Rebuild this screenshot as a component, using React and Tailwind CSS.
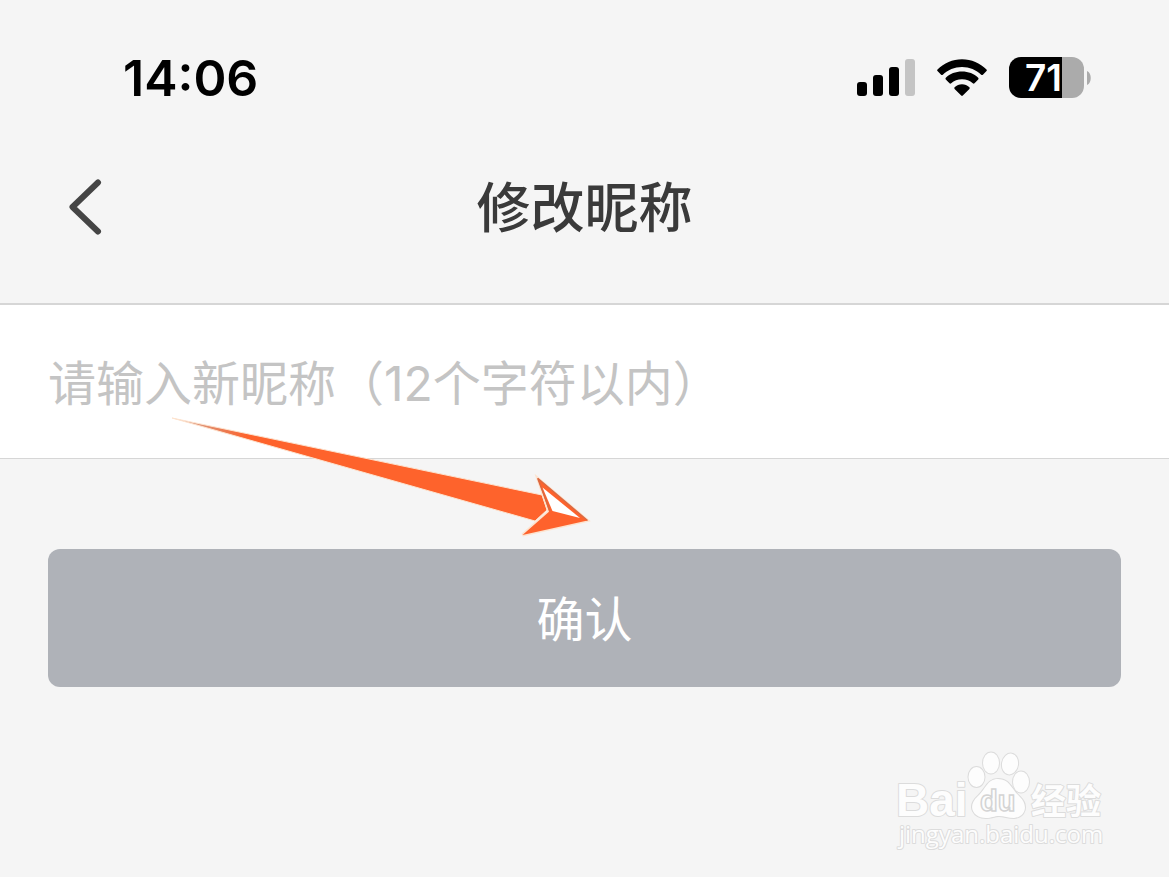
const CJK = "font-['Inter','Noto_Sans_CJK_SC',sans-serif]";

function Signal() {
  return (
    <svg width="58" height="38" viewBox="0 0 58 38" aria-hidden="true">
      <rect x="0" y="23" width="10" height="14" rx="3" fill="#000" />
      <rect x="16" y="16" width="10" height="21" rx="3" fill="#000" />
      <rect x="32" y="8" width="10" height="29" rx="3" fill="#000" />
      <rect x="48" y="0" width="10" height="37" rx="3" fill="#c4c4c4" />
    </svg>
  );
}

function Wifi() {
  return (
    <svg width="50" height="38" viewBox="0 0 50 38" aria-hidden="true">
      <path d="M0.5 10.4C7 4 15.500 .2 25 .2s18 3.800 24.500 10.200q.7 .8 0 1.600l-3.600 3.700q-.8 .8-1.700 0C39.200 11 32.500 8 25 8S10.800 11 5.800 15.700q-.9 .8-1.700 0L.5 12q-.7-.8 0-1.600Z" />
      <path d="M8.800 18.800C13 14.800 18.600 12.600 25 12.600s12 2.200 16.200 6.200q.8 .9 0 1.700l-3.700 3.800q-.8 .8-1.700 0C33 21.900 29.300 20.300 25 20.300s-8 1.600-10.800 4q-.9 .8-1.700 0l-3.700-3.800q-.8-.8 0-1.700Z" />
      <path d="M17.600 28.300C19.700 26.100 22.200 25.200 25 25.200s5.300 .9 7.400 3.100q.7 .9 0 1.600l-6.600 6.700q-.8 .8-1.600 0l-6.600-6.700q-.7-.8 0-1.600Z" />
    </svg>
  );
}

function Battery() {
  return (
    <div className="flex items-center gap-[3px]">
      <div className="flex h-[41px] w-[75px] items-center rounded-[12px] bg-[linear-gradient(90deg,#000_53px,#ababab_53px)] pl-4 text-[37px] leading-none font-semibold text-white">
        71
      </div>
      <svg width="4" height="14" viewBox="0 0 4 14" aria-hidden="true">
        <path d="M0 0C5 2 5 12 0 14Z" fill="#ababab" />
      </svg>
    </div>
  );
}

function Arrow() {
  return (
    <svg
      className="pointer-events-none absolute top-[114px] left-[172px] overflow-visible"
      width="418"
      height="120"
      viewBox="0 0 418 120"
      aria-hidden="true"
    >
      <defs>
        <linearGradient id="tail" x1="0" x2="1" y1="0" y2="0">
          <stop offset="0" stopColor="#b9623f" stopOpacity=".5" />
          <stop offset=".2" stopColor="#fe632c" />
        </linearGradient>
      </defs>
      <path d="M0 -1L370 76L375 91L363 102Z" fill="url(#tail)" stroke="#fde3cf" strokeWidth="1" />
      <path d="M365.700 59.300L415.500 101.500L350.500 116L377 92.700Z" fill="#fe622c" stroke="#fde3cf" strokeWidth="3" paintOrder="stroke" />
      <path d="M370.500 68.500L408 99L380.500 92Z" fill="#fff" />
      <path d="M365.700 59.300L415.500 101.500M365.700 59.300L378 92" stroke="#db6941" strokeWidth="1.500" />
    </svg>
  );
}

function Watermark() {
  return (
    <svg
      className="absolute right-[60px] bottom-[22px]"
      width="216"
      height="106"
      viewBox="0 0 216 106"
      role="img"
      aria-label="Baidu 经验"
    >
      <g fill="#fdfdfd" stroke="#dcdcdc" strokeWidth="2" paintOrder="stroke" strokeLinejoin="round">
        <text x="3" y="67" fontSize="46" fontWeight="700" fontFamily="Liberation Sans, sans-serif">Bai</text>
        <ellipse cx="83.500" cy="28" rx="8" ry="10" />
        <ellipse cx="98" cy="14" rx="8" ry="10.500" />
        <ellipse cx="117" cy="15" rx="8" ry="10.500" transform="rotate(10 117 15)" />
        <ellipse cx="128" cy="33" rx="8" ry="10.500" />
        <path d="M105 30C94 30 93 40 85 47C73 58 81 69 93 69C99 69 101 67 106 67C111 67 115 69 121 69C132 68 136 57 127 48C118 40 117 30 105 30Z" />
        <text x="138" y="65" fontSize="35" fontWeight="700" fontFamily="Noto Sans CJK SC, sans-serif">经验</text>
        <text x="6" y="94" fontSize="24" fontWeight="500" fontFamily="Open Sans, sans-serif">jingyan.baidu.com</text>
      </g>
      <text x="87" y="62" fontSize="29" fill="#fdfdfd" stroke="#d4d4d4" strokeWidth="1.500" fontFamily="Liberation Sans, sans-serif" fontWeight="700">du</text>
    </svg>
  );
}

export default function App() {
  return (
    <div className={`relative flex min-h-screen flex-col bg-[#f5f5f5] ${CJK}`}>
      <div className="flex h-[155px] items-center justify-between pr-[78px] pl-[123px]">
        <time className="text-[50px] leading-none font-semibold text-black">14:06</time>
        <div className="flex items-center gap-[22px]">
          <Signal />
          <Wifi />
          <Battery />
        </div>
      </div>

      <header className="grid h-[150px] grid-cols-[1fr_auto_1fr] items-start border-b-2 border-[#d6d6d6] px-[68px] pt-3">
        <button type="button" aria-label="返回" className="flex h-20 w-10 items-center">
          <svg width="34" height="56" viewBox="0 0 34 56" fill="none" aria-hidden="true">
            <path d="M30 3.500L4.500 28L30 52.500" stroke="#454545" strokeWidth="6" strokeLinecap="round" strokeLinejoin="round" />
          </svg>
        </button>
        <h1 className="text-[54px] leading-[84px] font-medium text-[#3a3a3a]">修改昵称</h1>
      </header>

      <main className="relative">
        <input
          type="text"
          maxLength={12}
          aria-label="新昵称"
          placeholder="请输入新昵称（12个字符以内）"
          className="block h-[154px] w-full border-b border-[#d6d6d6] bg-white px-12 pt-1 text-[48px] text-[#3a3a3a] outline-none placeholder:text-[#c4c4c4]"
        />
        <div className="px-12 pt-[90px]">
          <button
            type="button"
            className="h-[138px] w-full rounded-xl bg-[#afb2b8] pt-1 text-[48px] text-white"
          >
            确认
          </button>
        </div>
        <Arrow />
      </main>

      <Watermark />
    </div>
  );
}
